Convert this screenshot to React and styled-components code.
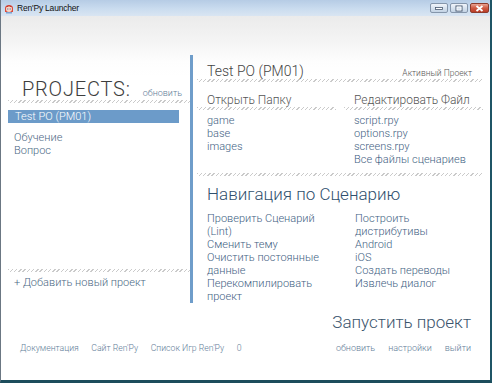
import styled, { createGlobalStyle } from "styled-components";

const GlobalStyle = createGlobalStyle`
  html, body {
    margin: 0;
    padding: 0;
    background: #fff;
  }
  body {
    font-family: Roboto, "Noto Sans", sans-serif;
  }
`;

const Window = styled.div`
  width: 492px;
  height: 383px;
  box-sizing: border-box;
  display: flex;
  flex-direction: column;
  border-left: 1px solid #6b7783;
  border-right: 2px solid #1f5566;
  border-bottom: 3px solid #1c4d5c;
  overflow: hidden;
`;

const TitleBar = styled.div`
  height: 16px;
  flex: none;
  display: flex;
  align-items: center;
  padding: 0 1px 0 3px;
  background: linear-gradient(#b6cce5, #cadcef 55%, #d9e5f2);
`;

const Title = styled.span`
  margin-left: 3px;
  font-family: "Liberation Sans", Arial, sans-serif;
  font-size: 8.5px;
  letter-spacing: -0.2px;
  color: #111;
  flex: 1;
`;

const WinButtons = styled.div`
  display: flex;
  gap: 2px;
`;

const WinButton = styled.div`
  width: ${(p) => p.$w}px;
  height: 10px;
  box-sizing: border-box;
  border: 1px solid ${(p) => (p.$close ? "#8c3b2c" : "#8596ab")};
  border-radius: 2px;
  background: ${(p) =>
    p.$close
      ? "linear-gradient(#eaa493, #cf5a43 50%, #b93d28)"
      : "linear-gradient(#f1f5fa, #d8e3ef 50%, #c3d3e5)"};
  display: flex;
  align-items: center;
  justify-content: center;
`;

const Body = styled.div`
  flex: 1;
  display: flex;
  flex-direction: column;
  background: linear-gradient(#ebebeb, #f4f4f4 25px, #fdfdfd 45px, #fff 60px);
`;

const Main = styled.div`
  display: flex;
  margin-top: 39px;
`;

const LeftPanel = styled.div`
  width: 182px;
  margin-left: 7px;
  display: flex;
  flex-direction: column;
`;

const Divider = styled.div`
  width: 3px;
  background: #6f9dca;
`;

const RightPanel = styled.div`
  flex: 1;
  padding: 0 7px 0 4px;
`;

const Hatch = styled.div`
  height: 3px;
  flex: none;
  margin-top: ${(p) => p.$mt || 0}px;
  background: repeating-linear-gradient(
    135deg,
    #cacaca 0 1px,
    transparent 1px 3px
  );
`;

const ProjectsHeader = styled.div`
  display: flex;
  align-items: baseline;
  justify-content: space-between;
  margin-top: 23px;
  padding: 0 8px 0 14px;
`;

const BigLabel = styled.span`
  font-size: 20px;
  line-height: 23px;
  font-weight: 300;
  letter-spacing: 0.8px;
  color: #3d3d3d;
`;

const SmallLink = styled.span`
  font-size: ${(p) => p.$size || 9}px;
  line-height: 12px;
  font-weight: 300;
  color: ${(p) => p.$color || "#5f7d98"};
`;

const ProjectRow = styled.div`
  margin-top: ${(p) => (p.$selected ? 7 : 0)}px;
  margin-right: 11px;
  padding-left: ${(p) => (p.$selected ? 7 : 6)}px;
  height: 13px;
  font-size: 11px;
  line-height: 13px;
  font-weight: 300;
  color: ${(p) => (p.$selected ? "#fff" : "#4c6984")};
  background: ${(p) => (p.$selected ? "#6c9bc9" : "transparent")};
`;

const ProjectList = styled.div`
  margin-top: 8px;
`;

const Spacer = styled.div`
  flex: 1;
`;

const AddProject = styled.div`
  margin-top: 4px;
  padding: 0 0 14px 6px;
  font-size: 11px;
  line-height: 13px;
  font-weight: 300;
  color: #4c6984;
`;

const ProjectHeader = styled.div`
  display: flex;
  align-items: baseline;
  justify-content: space-between;
  margin-top: 8px;
  padding: 0 11px 0 10px;
`;

const ProjectName = styled.span`
  font-size: 14px;
  line-height: 16px;
  font-weight: 300;
  color: #444;
`;

const Columns = styled.div`
  display: grid;
  grid-template-columns: 1fr 1fr;
  column-gap: 8px;
  margin-top: 12px;
`;

const ColumnTitle = styled.div`
  padding-left: 10px;
  font-size: 12px;
  line-height: 13px;
  font-weight: 300;
  color: #555;
`;

const LinkList = styled.div`
  margin-top: ${(p) => p.$mt || 0}px;
  padding-left: 10px;
  width: ${(p) => p.$w || "auto"};
`;

const Link = styled.div`
  font-size: 11px;
  line-height: 13px;
  font-weight: 300;
  color: #3f6283;
`;

const SectionTitle = styled.div`
  margin-top: 8px;
  padding-left: 10px;
  font-size: 17px;
  line-height: 20px;
  font-weight: 300;
  color: #2f4f6d;
`;

const NavGrid = styled.div`
  display: grid;
  grid-template-columns: 148px 1fr;
  margin-top: 8px;
`;

const Launch = styled.div`
  margin-top: 9px;
  padding-right: 19px;
  text-align: right;
  font-size: 17px;
  line-height: 20px;
  font-weight: 300;
  color: #3b546c;
`;

const Footer = styled.div`
  display: flex;
  justify-content: space-between;
  margin-top: 10px;
  padding: 0 19px;
`;

const FooterGroup = styled.div`
  display: flex;
  gap: ${(p) => p.$gap || 12}px;
`;

function RenpyIcon() {
  return (
    <svg width="10" height="11" viewBox="0 0 10 11">
      <path d="M1 5 C1 1 9 1 9 5 L9 9 L1 9 Z" fill="#d9483b" />
      <circle cx="5" cy="6" r="3" fill="#f6d7c6" />
      <path d="M2 4 C3 2 7 2 8 4 L6 4 L5 3 L4 4 Z" fill="#c23a2e" />
      <rect x="3.3" y="5.5" width="1" height="1" fill="#3a4a8a" />
      <rect x="5.7" y="5.5" width="1" height="1" fill="#3a4a8a" />
      <path d="M2 9 L8 9 L8 10.5 L2 10.5 Z" fill="#7aa0d0" />
    </svg>
  );
}

export default function App() {
  return (
    <>
      <GlobalStyle />
      <Window>
        <TitleBar>
          <RenpyIcon />
          <Title>Ren'Py Launcher</Title>
          <WinButtons>
            <WinButton $w={18}>
              <svg width="8" height="4" viewBox="0 0 8 4">
                <rect x="0.5" y="1.5" width="7" height="2" fill="#fff" stroke="#4a5a70" strokeWidth="0.8" />
              </svg>
            </WinButton>
            <WinButton $w={18}>
              <svg width="8" height="7" viewBox="0 0 8 7">
                <rect x="1" y="1" width="6" height="5" fill="none" stroke="#4a5a70" strokeWidth="1" />
                <rect x="2" y="2" width="4" height="3" fill="none" stroke="#fff" strokeWidth="0.8" />
              </svg>
            </WinButton>
            <WinButton $w={19} $close>
              <svg width="9" height="7" viewBox="0 0 9 7">
                <path d="M1.5 1 L7.5 6 M7.5 1 L1.5 6" stroke="#fff" strokeWidth="1.8" />
              </svg>
            </WinButton>
          </WinButtons>
        </TitleBar>
        <Body>
          <Main>
            <LeftPanel>
              <ProjectsHeader>
                <BigLabel>PROJECTS:</BigLabel>
                <SmallLink>обновить</SmallLink>
              </ProjectsHeader>
              <Hatch $mt={-1} />
              <ProjectRow $selected>Test PO (PM01)</ProjectRow>
              <ProjectList>
                <ProjectRow>Обучение</ProjectRow>
                <ProjectRow>Вопрос</ProjectRow>
              </ProjectList>
              <Spacer />
              <Hatch />
              <AddProject>+ Добавить новый проект</AddProject>
            </LeftPanel>
            <Divider />
            <RightPanel>
              <ProjectHeader>
                <ProjectName>Test PO (PM01)</ProjectName>
                <SmallLink $size={8.5} $color="#555">Активный Проект</SmallLink>
              </ProjectHeader>
              <Hatch />
              <Columns>
                <div>
                  <ColumnTitle>Открыть Папку</ColumnTitle>
                  <Hatch />
                  <LinkList $mt={4}>
                    <Link>game</Link>
                    <Link>base</Link>
                    <Link>images</Link>
                  </LinkList>
                </div>
                <div>
                  <ColumnTitle>Редактировать Файл</ColumnTitle>
                  <Hatch />
                  <LinkList $mt={4}>
                    <Link>script.rpy</Link>
                    <Link>options.rpy</Link>
                    <Link>screens.rpy</Link>
                    <Link>Все файлы сценариев</Link>
                  </LinkList>
                </div>
              </Columns>
              <Hatch $mt={7} />
              <SectionTitle>Навигация по Сценарию</SectionTitle>
              <NavGrid>
                <LinkList $w="125px">
                  <Link>Проверить Сценарий (Lint)</Link>
                  <Link>Сменить тему</Link>
                  <Link>Очистить постоянные данные</Link>
                  <Link>Перекомпилировать проект</Link>
                </LinkList>
                <LinkList $w="125px">
                  <Link>Построить дистрибутивы</Link>
                  <Link>Android</Link>
                  <Link>iOS</Link>
                  <Link>Создать переводы</Link>
                  <Link>Извлечь диалог</Link>
                </LinkList>
              </NavGrid>
            </RightPanel>
          </Main>
          <Launch>Запустить проект</Launch>
          <Footer>
            <FooterGroup $gap={12.5}>
              <SmallLink $size={8.7}>Документация</SmallLink>
              <SmallLink $size={8.7}>Сайт Ren'Py</SmallLink>
              <SmallLink $size={8.7}>Список Игр Ren'Py</SmallLink>
              <SmallLink $size={8.7}>0</SmallLink>
            </FooterGroup>
            <FooterGroup $gap={13}>
              <SmallLink>обновить</SmallLink>
              <SmallLink>настройки</SmallLink>
              <SmallLink>выйти</SmallLink>
            </FooterGroup>
          </Footer>
        </Body>
      </Window>
    </>
  );
}
